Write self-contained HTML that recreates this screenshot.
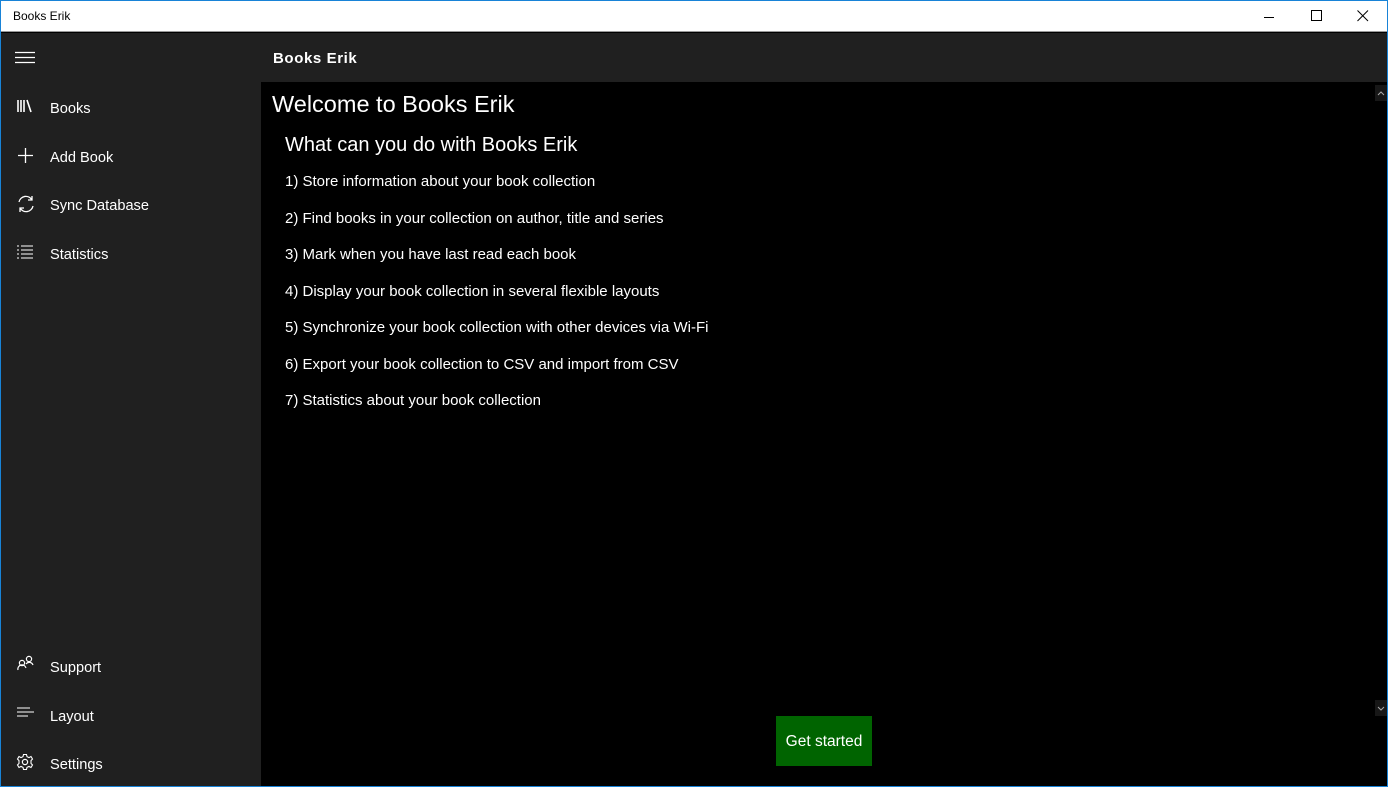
<!DOCTYPE html>
<html><head><style>
*{margin:0;padding:0;box-sizing:border-box}
body{width:1388px;height:787px;overflow:hidden;background:#1883d7;font-family:"Liberation Sans",sans-serif;position:relative}
#win{position:absolute;left:1px;top:1px;width:1386px;height:785px;background:#000}
#title{position:absolute;left:0;top:0;width:1386px;height:31px;background:#fff;border-bottom:1px solid #999}
#title span{position:absolute;left:12px;top:8px;font-size:12px;color:#000}
#side{position:absolute;left:0;top:32px;width:260px;height:753px;background:#202020;color:#fff}
.nav{position:absolute;left:49px;font-size:14.6px}
.ic{position:absolute;left:14px}
#hdr{position:absolute;left:260px;top:32px;width:1126px;height:49px;background:#202020;color:#fff;font-weight:bold;font-size:15px;letter-spacing:0.6px}
#hdr span{position:absolute;left:12px;top:17px}
#content{position:absolute;left:260px;top:81px;width:1126px;height:704px;color:#fff}
.li{position:absolute;left:24px;font-size:15px}
.sbb{position:absolute;right:0;width:12px;height:16px;background:#171717}
#btn{position:absolute;left:515px;top:634px;width:96px;height:50px;background:#006400;color:#fff;font-size:15.5px;text-align:center;line-height:52px}
</style></head><body><div id="win">
<div id="title"><span>Books Erik</span>
<svg style="position:absolute;left:1262px;top:10px" width="12" height="12"><path d="M1 6.5H11" stroke="#000" stroke-width="1"/></svg>
<svg style="position:absolute;left:1310px;top:9px" width="12" height="12"><rect x="0.5" y="0.5" width="10" height="10" fill="none" stroke="#000"/></svg>
<svg style="position:absolute;left:1356px;top:9px" width="12" height="12"><path d="M0.5 0.5L11 11M11 0.5L0.5 11" stroke="#000"/></svg>
</div>
<div id="side">
<svg class="ic" style="top:18px" width="22" height="14"><path d="M0 1.5H20M0 6.5H20M0 11.5H20" stroke="#fff" stroke-width="1.2"/></svg>
<svg class="ic" style="top:66px;left:16px" width="18" height="14"><path d="M1 1V13M4 1V13M7 1V13M10 1L14 13" stroke="#fff" stroke-width="1.6"/></svg>
<div class="nav" style="top:68px">Books</div>
<svg class="ic" style="top:114px;left:16px" width="18" height="18"><path d="M8.5 1V16M1 8.5H16" stroke="#fff" stroke-width="1.3"/></svg>
<div class="nav" style="top:117px">Add Book</div>
<svg class="ic" style="top:162px;left:16px" width="18" height="18"><path d="M2 7A7 7 0 0 1 15 5M15 1V5H11M16 11A7 7 0 0 1 3 13M3 17V13H7" stroke="#fff" stroke-width="1.3" fill="none"/></svg>
<div class="nav" style="top:165px">Sync Database</div>
<svg class="ic" style="top:212px;left:16px" width="18" height="14"><path d="M0 1H2M4 1H16M0 5H2M4 5H16M0 9H2M4 9H16M0 13H2M4 13H16" stroke="#fff" stroke-width="1.1"/></svg>
<div class="nav" style="top:214px">Statistics</div>
<svg class="ic" style="top:622px;left:16px" width="18" height="16"><circle cx="5" cy="8" r="2.6" stroke="#fff" fill="none" stroke-width="1.2"/><circle cx="12" cy="4" r="2.6" stroke="#fff" fill="none" stroke-width="1.2"/><path d="M1 15A4 4 0 0 1 9 13M9 9A4 4 0 0 1 16 10" stroke="#fff" fill="none" stroke-width="1.2"/></svg>
<div class="nav" style="top:627px">Support</div>
<svg class="ic" style="top:674px;left:16px" width="18" height="12"><path d="M0 1H13M0 5H17M0 9H11" stroke="#fff" stroke-width="1.1"/></svg>
<div class="nav" style="top:676px">Layout</div>
<svg class="ic" style="top:720px;left:15px" width="18" height="18" viewBox="0 0 18 18"><circle cx="9" cy="9" r="2.6" stroke="#fff" fill="none" stroke-width="1.2"/><path d="M7.5 1.5H10.5L11 3.6L13 4.6L15 3.5L16.5 6L15 7.6V10.4L16.5 12L15 14.5L13 13.4L11 14.4L10.5 16.5H7.5L7 14.4L5 13.4L3 14.5L1.5 12L3 10.4V7.6L1.5 6L3 3.5L5 4.6L7 3.6Z" stroke="#fff" fill="none" stroke-width="1.1"/></svg>
<div class="nav" style="top:724px">Settings</div>
</div>
<div id="hdr"><span>Books Erik</span></div>
<div id="content">
<div style="position:absolute;left:11px;top:9px;font-size:23.5px">Welcome to Books Erik</div>
<div style="position:absolute;left:24px;top:52px;font-size:20px">What can you do with Books Erik</div>
<div class="li" style="top:91px">1) Store information about your book collection</div>
<div class="li" style="top:128px">2) Find books in your collection on author, title and series</div>
<div class="li" style="top:164px">3) Mark when you have last read each book</div>
<div class="li" style="top:201px">4) Display your book collection in several flexible layouts</div>
<div class="li" style="top:237px">5) Synchronize your book collection with other devices via Wi-Fi</div>
<div class="li" style="top:274px">6) Export your book collection to CSV and import from CSV</div>
<div class="li" style="top:310px">7) Statistics about your book collection</div>
<div class="sbb" style="top:3px"><svg style="position:absolute;left:2px;top:5px" width="8" height="6"><path d="M1 5L4 2L7 5" stroke="#aaa" fill="none"/></svg></div>
<div class="sbb" style="top:618px"><svg style="position:absolute;left:2px;top:6px" width="8" height="6"><path d="M1 1L4 4L7 1" stroke="#aaa" fill="none"/></svg></div>
<div id="btn">Get started</div>
</div>
</div></body></html>
